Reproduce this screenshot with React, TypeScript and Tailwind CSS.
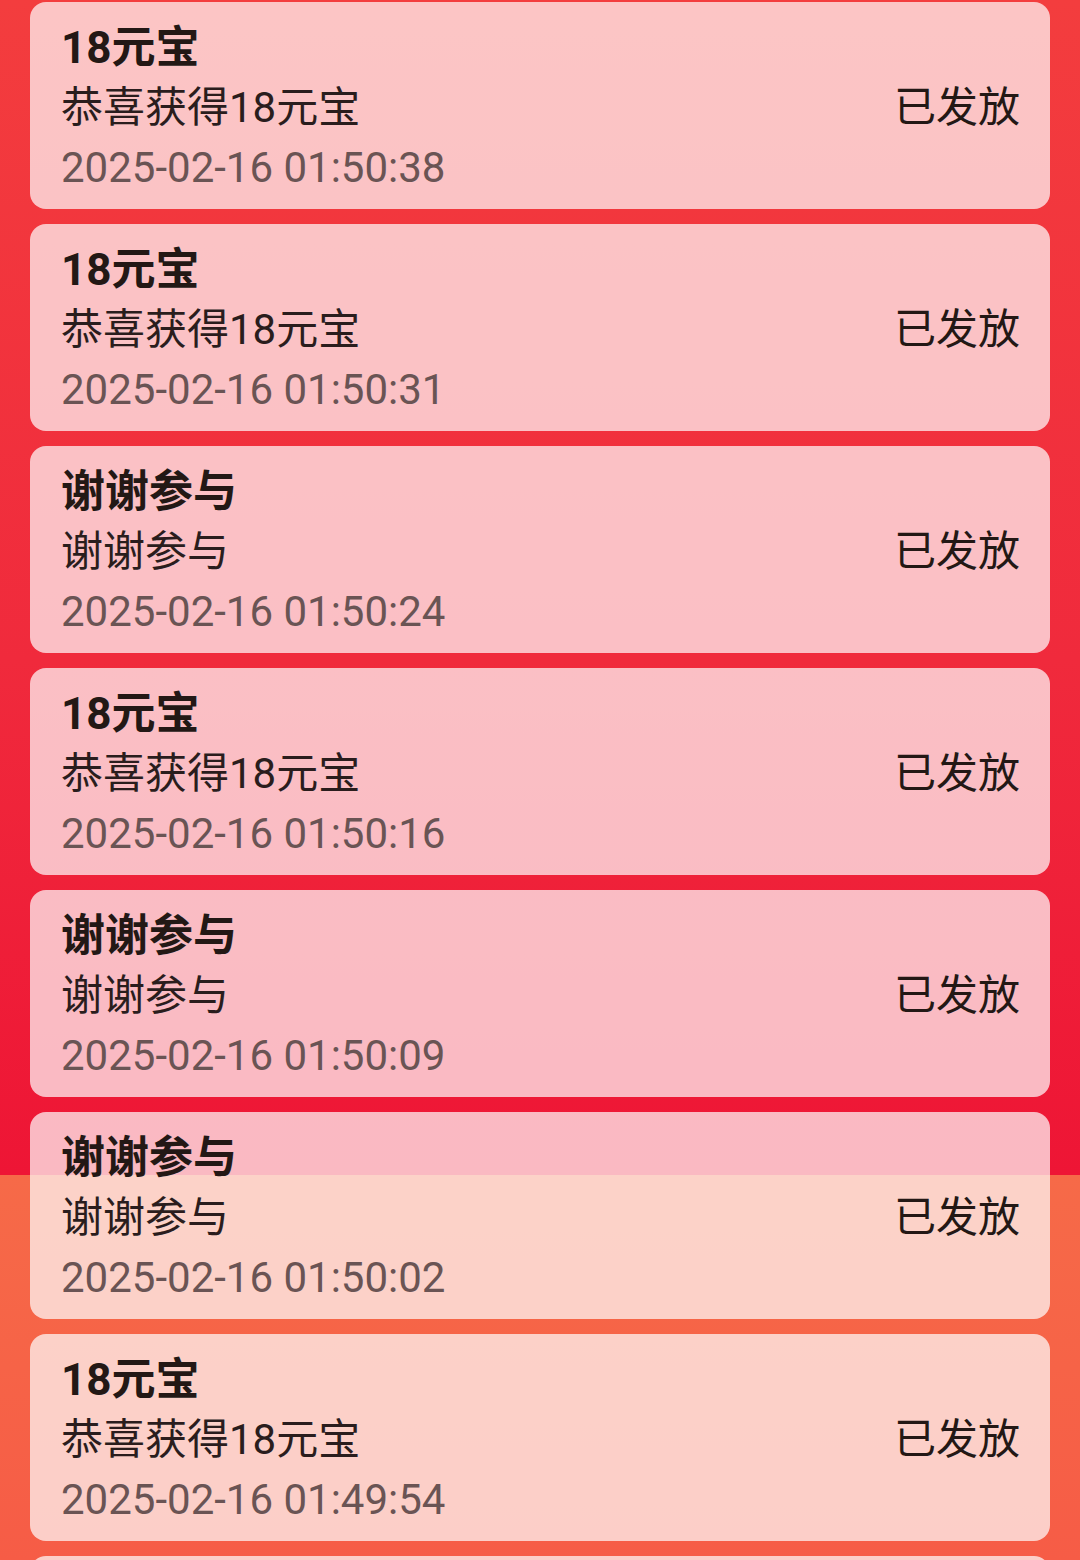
import React from 'react';

type Record = {
  title: string;
  desc: string;
  time: string;
};

const records: Record[] = [
  { title: '18元宝', desc: '恭喜获得18元宝', time: '2025-02-16 01:50:38' },
  { title: '18元宝', desc: '恭喜获得18元宝', time: '2025-02-16 01:50:31' },
  { title: '谢谢参与', desc: '谢谢参与', time: '2025-02-16 01:50:24' },
  { title: '18元宝', desc: '恭喜获得18元宝', time: '2025-02-16 01:50:16' },
  { title: '谢谢参与', desc: '谢谢参与', time: '2025-02-16 01:50:09' },
  { title: '谢谢参与', desc: '谢谢参与', time: '2025-02-16 01:50:02' },
  { title: '18元宝', desc: '恭喜获得18元宝', time: '2025-02-16 01:49:54' },
  { title: '18元宝', desc: '恭喜获得18元宝', time: '2025-02-16 01:49:47' },
];

function RecordCard({ item }: { item: Record }) {
  return (
    <div className="flex h-[207px] shrink-0 items-center justify-between rounded-[16px] bg-white/70 pl-[31px] pr-[30px] pt-[5px]">
      <div className="flex flex-col">
        <div className="h-[60px] text-[44px] font-bold leading-[60px] text-[#231815]">{item.title}</div>
        <div className="h-[60px] text-[42px] leading-[60px] text-[#2a1d1d]">{item.desc}</div>
        <div className="h-[60px] text-[42px] leading-[60px] text-[#6a5454]">{item.time}</div>
      </div>
      <div className="text-[42px] leading-[60px] text-[#231815]">已发放</div>
    </div>
  );
}

export default function App() {
  return (
    <div
      className="h-[1560px] w-[1080px] overflow-hidden bg-[linear-gradient(to_bottom,#f33d3e_0px,#f02a3c_660px,#ee1535_1175px,#f66a48_1175px,#f65c46_1560px)] px-[30px] pt-[2px]"
      style={{ fontFamily: 'Roboto, "Noto Sans CJK SC", sans-serif' }}
    >
      <div className="flex flex-col gap-[15px]">
        {records.map((item, i) => (
          <RecordCard key={i} item={item} />
        ))}
      </div>
    </div>
  );
}
